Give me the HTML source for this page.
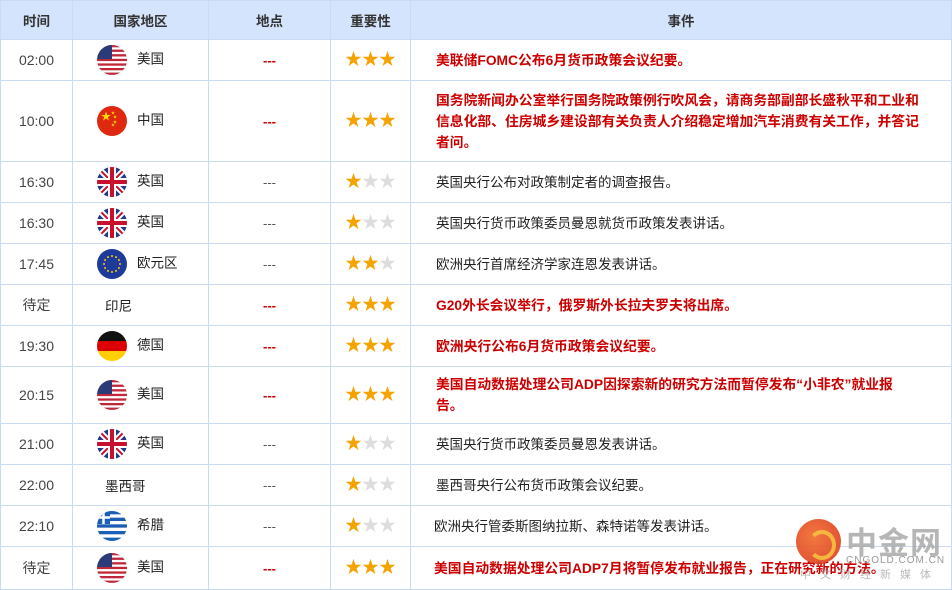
<!DOCTYPE html><html><head><meta charset="utf-8"><style>
body{margin:0;width:952px;height:590px;overflow:hidden;background:#fff;font-family:"Liberation Sans","Noto Sans CJK SC",sans-serif;font-size:13px;color:#333;position:relative}
table{border-collapse:collapse;table-layout:fixed;width:952px;position:absolute;left:0;top:0}
td,th{border:1px solid #c9dbf3;padding:0;text-align:center;vertical-align:middle}
td:first-child{font-size:14px;color:#444}
th{background:#d3e4fc;height:38px;font-weight:bold;font-size:13.5px;color:#333}
.c{text-align:left;padding-left:24px;font-size:13.5px;color:#222}
.ev{text-align:left;padding-left:25px;padding-right:10px;line-height:21px;font-size:13.5px;color:#222;white-space:nowrap}
.r{color:#c00;font-weight:bold;font-size:13.8px}
.d{color:#c00;font-weight:bold}
.g{color:#555}
.f{display:inline-block;width:30px;height:30px;border-radius:50%;overflow:hidden;vertical-align:middle;margin-right:10px}
.f svg{display:block}
.s{color:#f5a300;font-size:17px;letter-spacing:0px;padding-bottom:6px}
.s i{font-style:normal;color:#ddd}
</style></head><body>
<table>
<colgroup><col style="width:72px"><col style="width:136px"><col style="width:122px"><col style="width:80px"><col></colgroup>
<tr><th>时间</th><th>国家地区</th><th>地点</th><th>重要性</th><th>事件</th></tr>
<tr style="height:41px"><td>02:00</td><td class="c"><span class="f us"></span>美国</td><td class="d">---</td><td class="s">★★★</td><td class="ev r">美联储FOMC公布6月货币政策会议纪要。</td></tr>
<tr style="height:81px"><td>10:00</td><td class="c"><span class="f cn"></span>中国</td><td class="d">---</td><td class="s">★★★</td><td class="ev r">国务院新闻办公室举行国务院政策例行吹风会，请商务部副部长盛秋平和工业和<br>信息化部、住房城乡建设部有关负责人介绍稳定增加汽车消费有关工作，并答记<br>者问。</td></tr>
<tr style="height:41px"><td>16:30</td><td class="c"><span class="f uk"></span>英国</td><td class="g">---</td><td class="s">★<i>★★</i></td><td class="ev">英国央行公布对政策制定者的调查报告。</td></tr>
<tr style="height:41px"><td>16:30</td><td class="c"><span class="f uk"></span>英国</td><td class="g">---</td><td class="s">★<i>★★</i></td><td class="ev">英国央行货币政策委员曼恩就货币政策发表讲话。</td></tr>
<tr style="height:41px"><td>17:45</td><td class="c"><span class="f eu"></span>欧元区</td><td class="g">---</td><td class="s">★★<i>★</i></td><td class="ev">欧洲央行首席经济学家连恩发表讲话。</td></tr>
<tr style="height:41px"><td>待定</td><td class="c" style="padding-left:32px">印尼</td><td class="d">---</td><td class="s">★★★</td><td class="ev r">G20外长会议举行，俄罗斯外长拉夫罗夫将出席。</td></tr>
<tr style="height:41px"><td>19:30</td><td class="c"><span class="f de"></span>德国</td><td class="d">---</td><td class="s">★★★</td><td class="ev r">欧洲央行公布6月货币政策会议纪要。</td></tr>
<tr style="height:57px"><td>20:15</td><td class="c"><span class="f us"></span>美国</td><td class="d">---</td><td class="s">★★★</td><td class="ev r">美国自动数据处理公司ADP因探索新的研究方法而暂停发布“小非农”就业报<br>告。</td></tr>
<tr style="height:41px"><td>21:00</td><td class="c"><span class="f uk"></span>英国</td><td class="g">---</td><td class="s">★<i>★★</i></td><td class="ev">英国央行货币政策委员曼恩发表讲话。</td></tr>
<tr style="height:41px"><td>22:00</td><td class="c" style="padding-left:32px">墨西哥</td><td class="g">---</td><td class="s">★<i>★★</i></td><td class="ev">墨西哥央行公布货币政策会议纪要。</td></tr>
<tr style="height:41px"><td>22:10</td><td class="c"><span class="f gr"></span>希腊</td><td class="g">---</td><td class="s">★<i>★★</i></td><td class="ev" style="padding-left:23px">欧洲央行管委斯图纳拉斯、森特诺等发表讲话。</td></tr>
<tr style="height:43px"><td>待定</td><td class="c"><span class="f us"></span>美国</td><td class="d">---</td><td class="s">★★★</td><td class="ev r" style="padding-left:23px">美国自动数据处理公司ADP7月将暂停发布就业报告，正在研究新的方法。</td></tr>
</table>
<div style="position:absolute;left:796px;top:519px;width:45px;height:45px;border-radius:50%;background:radial-gradient(circle at 40% 40%,#f06a2a,#d8301a);opacity:.9"></div>
<div style="position:absolute;left:808px;top:530px;width:20px;height:22px;border-radius:50%;border:4px solid #f7c040;border-left-color:transparent;opacity:.9"></div>
<div style="position:absolute;left:846px;top:518px;font-size:31px;font-weight:bold;color:#aaa;letter-spacing:1px;opacity:.85">中金网</div>
<div style="position:absolute;left:846px;top:555px;font-size:10px;color:#999;letter-spacing:1px">CNGOLD.COM.CN</div>
<div style="position:absolute;left:800px;top:566px;font-size:11px;color:#aaa;letter-spacing:9px;opacity:.8">中文财经新媒体</div>
<script>
const F={
us:'<svg width="30" height="30"><rect width="30" height="30" fill="#fff"/>'+[0,1,2,3,4,5,6].map(i=>`<rect y="${i*4.6}" width="30" height="2.3" fill="#c0283a"/>`).join('')+'<rect width="15" height="14" fill="#2b3a78"/></svg>',
cn:'<svg width="30" height="30"><rect width="30" height="30" fill="#de2910"/><text x="4" y="14" font-size="10" fill="#ffde00">★</text><text x="14" y="8" font-size="4" fill="#ffde00">★</text><text x="16" y="12" font-size="4" fill="#ffde00">★</text><text x="16" y="17" font-size="4" fill="#ffde00">★</text><text x="14" y="20" font-size="4" fill="#ffde00">★</text></svg>',
uk:'<svg width="30" height="30"><rect width="30" height="30" fill="#1f3a8a"/><path d="M0 0L30 30M30 0L0 30" stroke="#fff" stroke-width="6"/><path d="M0 0L30 30M30 0L0 30" stroke="#c8102e" stroke-width="2"/><path d="M15 0V30M0 15H30" stroke="#fff" stroke-width="8"/><path d="M15 0V30M0 15H30" stroke="#c8102e" stroke-width="4"/></svg>',
eu:'<svg width="30" height="30"><rect width="30" height="30" fill="#1e3a9a"/>'+Array.from({length:12},(_,i)=>{const a=i*Math.PI/6;return `<circle cx="${15+8*Math.cos(a)}" cy="${15+8*Math.sin(a)}" r="1" fill="#fc0"/>`}).join('')+'</svg>',
de:'<svg width="30" height="30"><rect width="30" height="10" fill="#111"/><rect y="10" width="30" height="10" fill="#dd0000"/><rect y="20" width="30" height="10" fill="#ffce00"/></svg>',
gr:'<svg width="30" height="30"><rect width="30" height="30" fill="#fff"/>'+[0,2,4,6,8].map(i=>`<rect y="${i*3.33}" width="30" height="3.33" fill="#1a5fb4"/>`).join('')+'<rect width="13" height="13" fill="#1a5fb4"/><path d="M6.5 0V13M0 6.5H13" stroke="#fff" stroke-width="2.5"/></svg>'};
document.querySelectorAll('.f').forEach(e=>{for(const k in F)if(e.classList.contains(k))e.innerHTML=F[k]});
</script>
</body></html>
